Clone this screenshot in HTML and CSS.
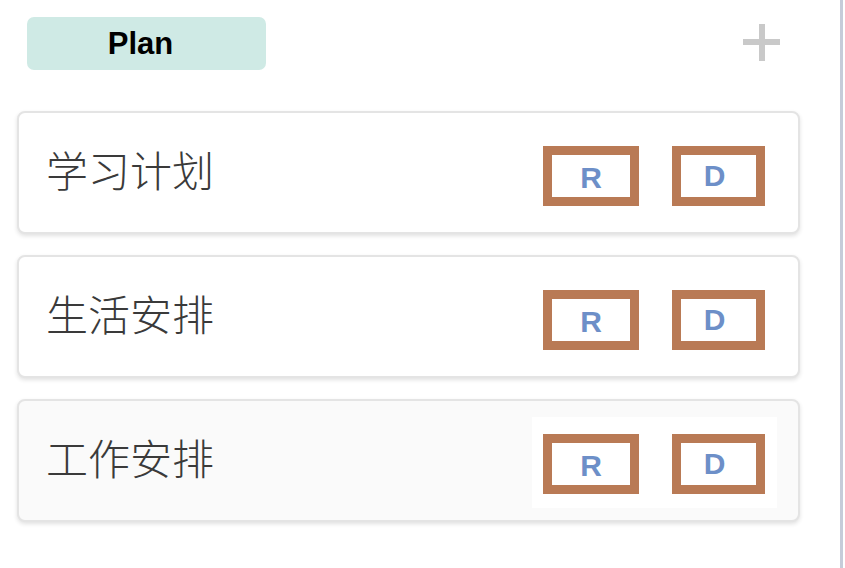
FILE: index.html
```html
<!DOCTYPE html>
<html lang="zh">
<head>
<meta charset="utf-8">
<title>Plan</title>
<link rel="stylesheet" href="styles.css">
</head>
<body>
<div class="page">
  <header class="header">
    <div class="tag">Plan</div>
    <svg class="add" width="37" height="37" viewBox="0 0 37 37" aria-label="add">
      <rect x="0" y="15" width="37" height="6" fill="#c9c9c9"/>
      <rect x="16" y="0" width="6" height="37" fill="#c9c9c9"/>
    </svg>
  </header>
  <ul class="list">
    <li class="card">
      <span class="title">学习计划</span>
      <div class="actions">
        <span class="btn btn-r">R</span>
        <span class="btn btn-d">D</span>
      </div>
    </li>
    <li class="card">
      <span class="title">生活安排</span>
      <div class="actions">
        <span class="btn btn-r">R</span>
        <span class="btn btn-d">D</span>
      </div>
    </li>
    <li class="card card-active">
      <span class="title">工作安排</span>
      <div class="actions">
        <span class="btn btn-r">R</span>
        <span class="btn btn-d">D</span>
      </div>
    </li>
  </ul>
</div>
</body>
</html>
```

FILE: styles.css
```css
* { box-sizing: border-box; }

html, body {
  margin: 0;
  padding: 0;
  background: #ffffff;
}

body {
  font-family: "Liberation Sans", "Noto Sans CJK SC", sans-serif;
}

.page {
  width: 843px;
  height: 568px;
  border-right: 3px solid #c6ccd9;
  padding-top: 17px;
}

.header {
  display: flex;
  align-items: center;
  justify-content: space-between;
  padding: 0 60px 0 27px;
  height: 53px;
}

.tag {
  width: 239px;
  height: 53px;
  border-radius: 7px;
  background: #cfeae5;
  color: #000;
  font-weight: bold;
  font-size: 31px;
  display: flex;
  align-items: center;
  justify-content: center;
  padding: 0 12px 0 0;
}

.add {
  display: block;
  margin-top: -2px;
}

.list {
  list-style: none;
  margin: 41px 0 0 17px;
  padding: 0;
  width: 783px;
  display: flex;
  flex-direction: column;
  gap: 21px;
}

.card {
  height: 123px;
  border: 2px solid #e4e4e4;
  border-radius: 8px;
  background: #ffffff;
  box-shadow: 0 2px 4px rgba(0, 0, 0, 0.12);
  display: flex;
  align-items: center;
  justify-content: space-between;
  padding: 0 21px 0 27px;
}

.card-active {
  background: #fafafa;
}

.title {
  font-family: "Noto Sans CJK SC", sans-serif;
  font-weight: 300;
  font-size: 42px;
  color: #3a3a3a;
  line-height: 1;
  margin-top: -7px;
}

.actions {
  display: flex;
  gap: 33px;
  padding: 17px 12px 14px 11px;
  background: #ffffff;
  margin-top: 4px;
}

.btn {
  height: 60px;
  border: 9px solid #b97a55;
  background: #ffffff;
  color: #6d8fc8;
  font-weight: bold;
  font-size: 30px;
  display: flex;
  align-items: center;
  justify-content: center;
}

.btn-r {
  width: 96px;
  padding-top: 4px;
}

.btn-d {
  width: 93px;
  padding: 0 8px 0 0;
}
```
